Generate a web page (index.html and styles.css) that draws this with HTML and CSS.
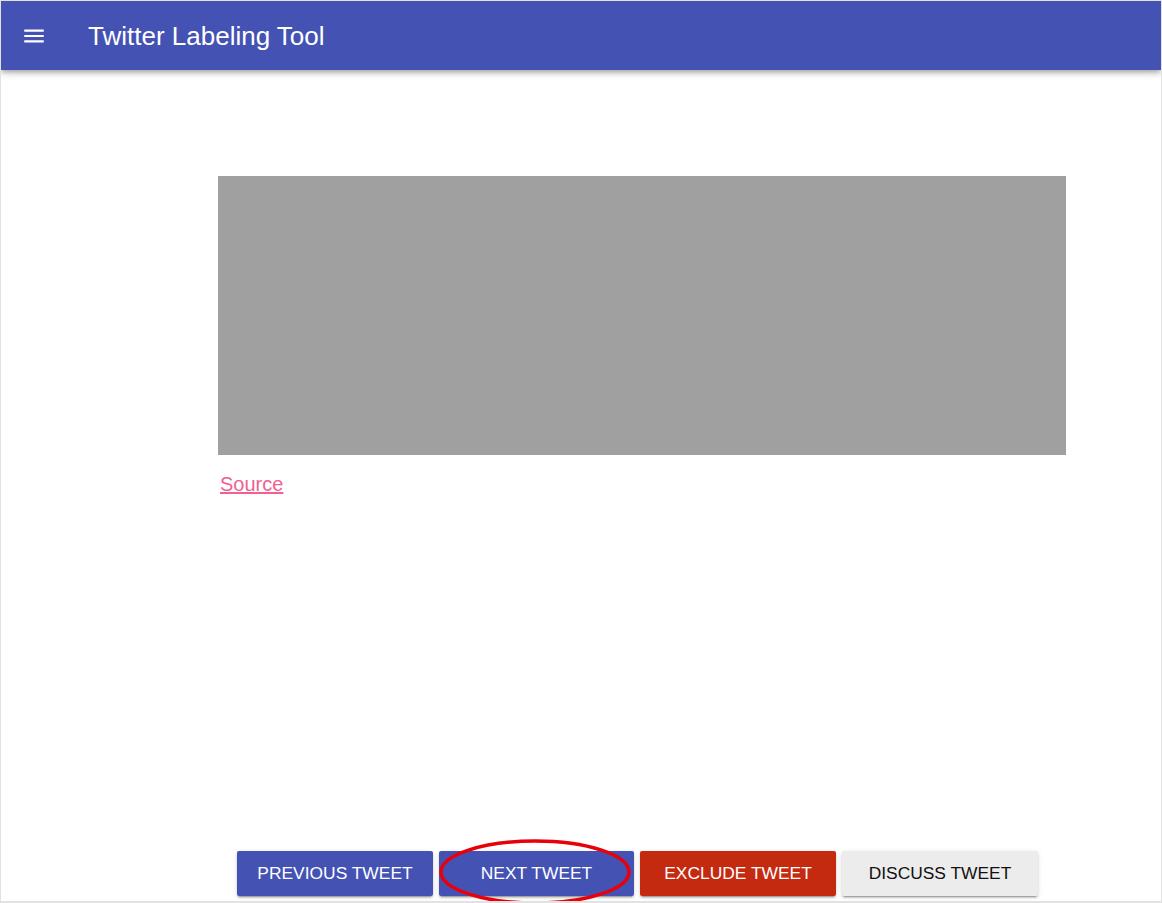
FILE: index.html
```html
<!DOCTYPE html>
<html>
<head>
<meta charset="utf-8">
<title>Twitter Labeling Tool</title>
<link rel="stylesheet" href="styles.css">
</head>
<body>
<div class="frame">
  <header class="appbar">
    <button class="menu" aria-label="menu">
      <svg width="24" height="24" viewBox="0 0 24 24"><path d="M3 18h18v-2H3v2zm0-5h18v-2H3v2zm0-7v2h18V6H3z" fill="#fff"/></svg>
    </button>
    <h1 class="title">Twitter Labeling Tool</h1>
  </header>
  <main class="content">
    <div class="tweet"></div>
    <a class="source" href="#">Source</a>
    <div class="spacer"></div>
    <div class="actions">
      <button class="btn primary">Previous Tweet</button>
      <button class="btn primary next">Next Tweet
        <svg class="circle" width="196" height="68" viewBox="0 0 196 68"><ellipse cx="96" cy="34" rx="94" ry="31" fill="none" stroke="#e8000b" stroke-width="3.5"/></svg>
      </button>
      <button class="btn danger">Exclude Tweet</button>
      <button class="btn plain">Discuss Tweet</button>
    </div>
  </main>
</div>
</body>
</html>
```
FILE: styles.css
```css
html, body {
  margin: 0;
  padding: 0;
  background: #fff;
  font-family: "Liberation Sans", Arial, sans-serif;
}
.frame {
  box-sizing: border-box;
  width: 1162px;
  height: 903px;
  border: 1px solid #e2e2e2;
  border-bottom-width: 2px;
  display: flex;
  flex-direction: column;
  overflow: hidden;
}
.appbar {
  height: 69px;
  flex: none;
  background: #4453b3;
  display: flex;
  align-items: center;
  box-shadow: 0 2px 4px -1px rgba(0,0,0,0.2), 0 4px 5px 0 rgba(0,0,0,0.14), 0 1px 10px 0 rgba(0,0,0,0.12);
  position: relative;
  z-index: 1;
}
.menu {
  background: none;
  border: 0;
  padding: 0;
  margin-left: 19px;
  width: 28px;
  height: 26px;
  display: flex;
  cursor: pointer;
}
.menu svg { width: 28px; height: 26px; }
.title {
  margin: 0 0 0 40px;
  padding-top: 2px;
  color: #fff;
  font-size: 26px;
  font-weight: 400;
}
.content {
  flex: 1;
  display: flex;
  flex-direction: column;
  padding: 106px 0 5px 217px;
}
.tweet {
  width: 848px;
  height: 279px;
  background: #a0a0a0;
}
.source {
  align-self: flex-start;
  margin: 17px 0 0 2px;
  color: #f0618f;
  font-size: 20px;
  line-height: 24px;
}
.spacer { flex: 1; }
.actions {
  display: flex;
  gap: 6px;
  margin-left: 19px;
}
.btn {
  position: relative;
  width: 196px;
  height: 45px;
  border: 0;
  border-radius: 2px;
  font-family: "Liberation Sans", Arial, sans-serif;
  font-size: 17.4px;
  text-transform: uppercase;
  box-shadow: 0 3px 1px -2px rgba(0,0,0,0.2), 0 2px 2px 0 rgba(0,0,0,0.14), 0 1px 5px 0 rgba(0,0,0,0.12);
  cursor: pointer;
}
.btn.next { width: 195px; }
.primary { background: #4453b3; color: #fff; }
.danger { background: #c42a10; color: #fff; }
.plain { background: #ececec; color: #111; }
.circle {
  position: absolute;
  left: 0;
  top: -13px;
  pointer-events: none;
}
```
